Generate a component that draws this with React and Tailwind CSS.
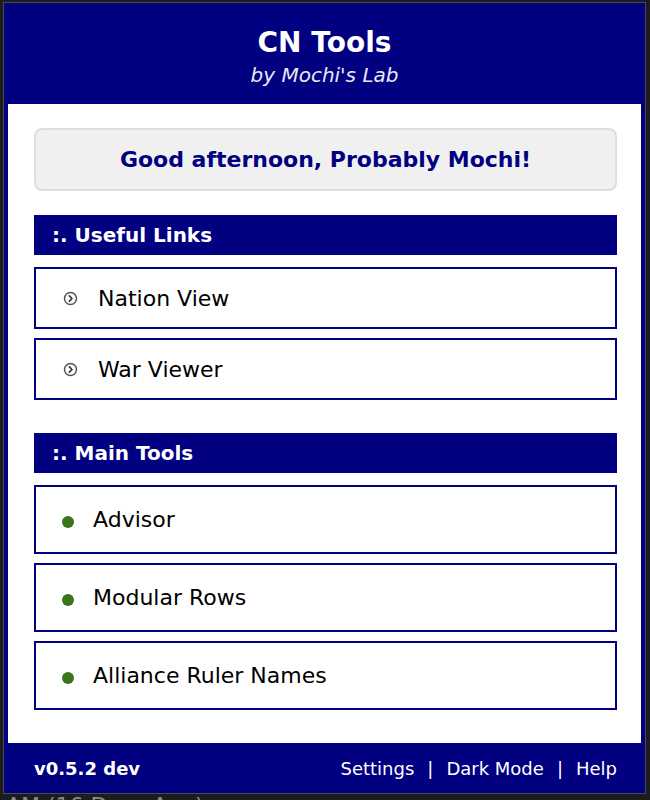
import React from 'react';

const usefulLinks = ['Nation View', 'War Viewer'];
const mainTools = ['Advisor', 'Modular Rows', 'Alliance Ruler Names'];

const CircleArrow = () => (
  <svg width="15" height="15" viewBox="0 0 15 15" className="shrink-0">
    <circle cx="7.5" cy="7.5" r="6" fill="none" stroke="#555" strokeWidth="1.5" />
    <path d="M6.4 4.9 L9 7.5 L6.4 10.1" fill="none" stroke="#333" strokeWidth="1.7" strokeLinecap="round" strokeLinejoin="round" />
  </svg>
);

const SectionBar = ({ title, className = '' }) => (
  <div className={`h-[40px] bg-[#000080] flex items-center pl-[18px] text-white font-bold text-[20px] ${className}`}>
    :. {title}
  </div>
);

const App = () => {
  return (
    <div className="w-[650px] h-[800px] bg-[#1c1c1c] pt-[3px] pl-[4px] overflow-hidden font-['DejaVu_Sans',sans-serif]">
      <div className="w-[641px] h-[790px] bg-[#000080] flex flex-col shadow-[0_0_0_1px_#4a4a4a]">
        {/* header */}
        <div className="h-[101px] pt-[23px] flex flex-col items-center">
          <h1 className="text-[28px] leading-[34px] font-bold text-white">CN Tools</h1>
          <p className="mt-[3px] text-[20px] leading-[24px] italic text-[#e8e8f6]">by Mochi's Lab</p>
        </div>

        {/* body */}
        <div className="mx-[4px] flex-1 bg-white pl-[26px] pr-[24px] pt-[24px]">
          <div className="h-[63px] rounded-[8px] border-2 border-[#dddddd] bg-[#f0f0f0] flex items-center justify-center text-[22px] font-bold text-[#000080]">
            Good afternoon, Probably Mochi!
          </div>

          <SectionBar title="Useful Links" className="mt-[24px]" />
          <div className="mt-[12px] flex flex-col gap-[9px]">
            {usefulLinks.map((name) => (
              <div key={name} className="h-[62px] border-2 border-[#000080] flex items-center pl-[27px] gap-[20px] text-[22px] text-black">
                <CircleArrow />
                <span>{name}</span>
              </div>
            ))}
          </div>

          <SectionBar title="Main Tools" className="mt-[33px]" />
          <div className="mt-[12px] flex flex-col gap-[9px]">
            {mainTools.map((name) => (
              <div key={name} className="h-[69px] border-2 border-[#000080] flex items-center pl-[26px] gap-[19px] text-[22px] text-black">
                <span className="w-[12px] h-[12px] rounded-full bg-[#38761d] shrink-0 translate-y-[2px]"></span>
                <span>{name}</span>
              </div>
            ))}
          </div>
        </div>

        {/* footer */}
        <div className="h-[50px] flex items-center justify-between pl-[30px] pr-[28px] text-white text-[18px]">
          <span className="font-bold">v0.5.2 dev</span>
          <div className="flex items-center gap-[13px]">
            <span>Settings</span>
            <span>|</span>
            <span>Dark Mode</span>
            <span>|</span>
            <span>Help</span>
          </div>
        </div>
      </div>
      <div className="h-[7px] overflow-hidden pl-[2px] text-[22px] leading-[26px] text-[#8a8a8a] whitespace-nowrap">
        AM (16 Days Ago)
      </div>
    </div>
  );
};

export default App;
